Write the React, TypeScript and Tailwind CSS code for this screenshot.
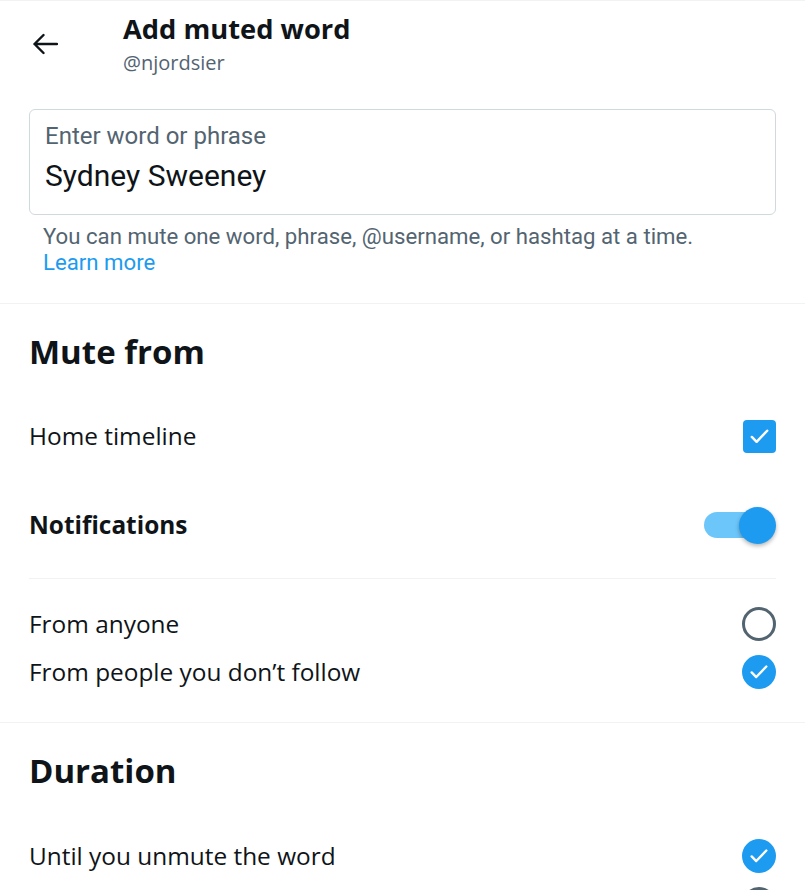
const chirp = "font-['Open_Sans','Noto_Sans',sans-serif]"
const roboto = "font-['Roboto','Liberation_Sans',sans-serif]"

function BackArrow() {
  return (
    <svg width="26" height="22" viewBox="0 0 26 22" fill="none">
      <path d="M25 11H2.5M11.5 2L2.5 11l9 9" stroke="#0f1419" strokeWidth="2.4" strokeLinecap="round" strokeLinejoin="round" />
    </svg>
  )
}

function CheckMark({ size = 20 }: { size?: number }) {
  return (
    <svg width={size} height={size} viewBox="0 0 24 24" fill="none">
      <path d="M4 12.5l5 5L20 6" stroke="white" strokeWidth="2.6" strokeLinecap="round" strokeLinejoin="round" />
    </svg>
  )
}

function Checkbox() {
  return (
    <div className="w-[33px] h-[33px] rounded-[4px] bg-[#1d9bf0] flex items-center justify-center">
      <CheckMark size={23} />
    </div>
  )
}

function Radio({ checked }: { checked: boolean }) {
  if (!checked) {
    return <div className="w-[34px] h-[34px] rounded-full border-[3px] border-[#536471]" />
  }
  return (
    <div className="w-[34px] h-[34px] rounded-full bg-[#1d9bf0] flex items-center justify-center">
      <CheckMark size={22} />
    </div>
  )
}

function Toggle() {
  return (
    <div className="relative w-[72px] h-[37px] flex items-center">
      <div className="w-[70px] h-[26px] rounded-full bg-[#6cc6fa]" />
      <div className="absolute right-0 top-0 w-[37px] h-[37px] rounded-full bg-[#1d9bf0] shadow-[0_2px_4px_rgba(0,0,0,0.3)]" />
    </div>
  )
}

function Row({ label, bold, children, className = '' }: { label: string; bold?: boolean; children: React.ReactNode; className?: string }) {
  return (
    <div className={`flex items-center justify-between px-[29px] ${className}`}>
      <span className={`text-[24.4px] text-[#0f1419] ${bold ? 'font-bold' : ''}`}>{label}</span>
      {children}
    </div>
  )
}

export default function App() {
  return (
    <div className={`w-[805px] h-[890px] overflow-hidden bg-white border-t border-[#eff3f4] ${chirp}`}>
      {/* header */}
      <div className="flex h-[108px]">
        <div className="w-[123px] pl-[32px] pt-[32px]">
          <BackArrow />
        </div>
        <div className="pt-[10px]">
          <h1 className="text-[27.3px] leading-[36px] font-bold text-[#0f1419]">Add muted word</h1>
          <p className="text-[20px] leading-[28px] text-[#536471] mt-[2px]">@njordsier</p>
        </div>
      </div>

      {/* input */}
      <div className={`px-[29px] ${roboto}`}>
        <div className="h-[106px] border border-[#cfd9de] rounded-[6px] px-[15px] pt-[12px]">
          <div className="text-[24px] leading-[28px] text-[#536471]">Enter word or phrase</div>
          <div className="text-[30px] leading-[36px] text-[#0f1419] mt-[8px]">Sydney Sweeney</div>
        </div>
        <div className="pl-[14px] pt-[8px] text-[22.2px] leading-[26px] text-[#536471]">
          You can mute one word, phrase, @username, or hashtag at a time.
          <div className="text-[#1d9bf0]">Learn more</div>
        </div>
      </div>

      <div className="mt-[28px] border-t border-[#eff3f4]" />

      {/* mute from */}
      <div className="h-[96px] flex items-center px-[29px]">
        <h2 className="text-[33px] font-bold text-[#0f1419]">Mute from</h2>
      </div>
      <Row label="Home timeline" className="h-[72px]"><Checkbox /></Row>
      <Row label="Notifications" bold className="h-[106px]"><Toggle /></Row>
      <div className="mx-[29px] border-t border-[#eff3f4]" />
      <div className="pt-[21px] pb-[26px]">
        <Row label="From anyone" className="h-[48px]"><Radio checked={false} /></Row>
        <Row label="From people you don’t follow" className="h-[48px]"><Radio checked /></Row>
      </div>
      <div className="border-t border-[#eff3f4]" />

      {/* duration */}
      <div className="h-[96px] flex items-center px-[29px]">
        <h2 className="text-[33px] font-bold text-[#0f1419]">Duration</h2>
      </div>
      <Row label="Until you unmute the word" className="h-[48px] mt-[13px]"><Radio checked /></Row>
      <div className="flex justify-end px-[29px] h-[48px] items-center">
        <Radio checked={false} />
      </div>
    </div>
  )
}
